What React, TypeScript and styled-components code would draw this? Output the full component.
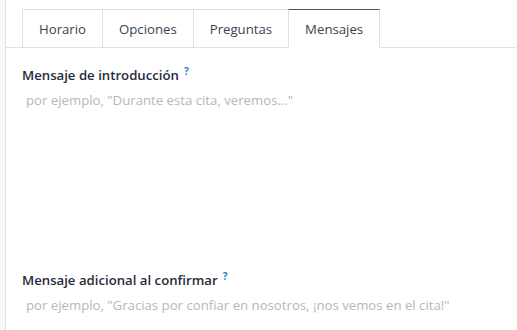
import React from "react";
import styled, { createGlobalStyle } from "styled-components";

const Global = createGlobalStyle`
  html, body { margin: 0; padding: 0; background: #ffffff; }
  body { font-family: "Open Sans", "Noto Sans", sans-serif; font-size: 13.2px; }
`;

const Page = styled.div`
  display: flex;
  width: 517px;
  height: 330px;
  overflow: hidden;
`;

const SideStrip = styled.div`
  width: 5px;
  flex: none;
  background: #f8f9fa;
  border-right: 1px solid #dee2e6;
`;

const Main = styled.div`
  flex: 1;
  display: flex;
  flex-direction: column;
  padding-top: 9px;
  padding-right: 1px;
`;

const TabBar = styled.ul`
  display: flex;
  margin: 0;
  padding: 0 0 0 16px;
  list-style: none;
  border-bottom: 1px solid #dee2e6;
`;

const Tab = styled.li<{ $active?: boolean }>`
  box-sizing: border-box;
  height: 39px;
  margin-bottom: -1px;
  margin-left: -1px;
  &:first-child { margin-left: 0; }
  padding: 0 16px;
  display: flex;
  align-items: center;
  color: #3b4352;
  background: #fff;
  border: 1px solid #dee2e6;
  border-top-color: ${(p) => (p.$active ? "#5e4b5d" : "#dee2e6")};
  border-bottom-color: ${(p) => (p.$active ? "#ffffff" : "#dee2e6")};
  position: relative;
  z-index: ${(p) => (p.$active ? 1 : 0)};
`;

const Body = styled.div`
  padding: 17px 16px 0 16px;
  display: flex;
  flex-direction: column;
`;

const Field = styled.div`
  display: flex;
  flex-direction: column;
  & + & { margin-top: 16px; }
`;

const Label = styled.div`
  line-height: 20px;
  font-weight: 600;
  color: #272c3a;
  margin-bottom: 5px;
`;

const Help = styled.sup`
  color: #1a85c2;
  font-size: 10px;
  font-weight: 700;
  margin-left: 5px;
  vertical-align: top;
  position: relative;
  top: -4px;
`;

const Editor = styled.div<{ $tall?: boolean }>`
  min-height: ${(p) => (p.$tall ? "164px" : "20px")};
  padding: 0 4px;
  line-height: 20px;
  color: #b3b8be;
`;

export default function App() {
  const tabs = ["Horario", "Opciones", "Preguntas", "Mensajes"];
  return (
    <>
      <Global />
      <Page>
        <SideStrip />
        <Main>
          <TabBar>
            {tabs.map((t) => (
              <Tab key={t} $active={t === "Mensajes"}>
                {t}
              </Tab>
            ))}
          </TabBar>
          <Body>
            <Field>
              <Label>
                Mensaje de introducción<Help>?</Help>
              </Label>
              <Editor $tall>por ejemplo, "Durante esta cita, veremos..."</Editor>
            </Field>
            <Field>
              <Label>
                Mensaje adicional al confirmar<Help>?</Help>
              </Label>
              <Editor>por ejemplo, "Gracias por confiar en nosotros, ¡nos vemos en el cita!"</Editor>
            </Field>
          </Body>
        </Main>
      </Page>
    </>
  );
}
